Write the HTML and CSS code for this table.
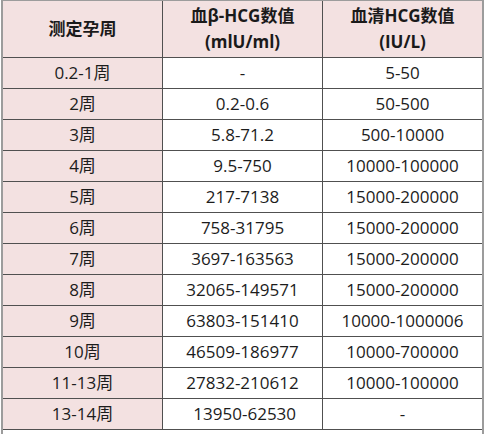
FILE: index.html
```html
<!DOCTYPE html>
<html lang="zh-CN">
<head>
<meta charset="utf-8">
<title>HCG数值表</title>
<link rel="stylesheet" href="styles.css">
</head>
<body>
<div class="frame">
  <table class="hcg">
    <thead>
      <tr>
        <th>测定孕周</th>
        <th>血β-HCG数值<br>(mlU/ml)</th>
        <th>血清HCG数值<br>(IU/L)</th>
      </tr>
    </thead>
    <tbody>
      <tr><td class="week">0.2-1周</td><td>-</td><td>5-50</td></tr>
      <tr><td class="week">2周</td><td>0.2-0.6</td><td>50-500</td></tr>
      <tr><td class="week">3周</td><td>5.8-71.2</td><td>500-10000</td></tr>
      <tr><td class="week">4周</td><td>9.5-750</td><td>10000-100000</td></tr>
      <tr><td class="week">5周</td><td>217-7138</td><td>15000-200000</td></tr>
      <tr><td class="week">6周</td><td>758-31795</td><td>15000-200000</td></tr>
      <tr><td class="week">7周</td><td>3697-163563</td><td>15000-200000</td></tr>
      <tr><td class="week">8周</td><td>32065-149571</td><td>15000-200000</td></tr>
      <tr><td class="week">9周</td><td>63803-151410</td><td>10000-1000006</td></tr>
      <tr><td class="week">10周</td><td>46509-186977</td><td>10000-700000</td></tr>
      <tr><td class="week">11-13周</td><td>27832-210612</td><td>10000-100000</td></tr>
      <tr><td class="week">13-14周</td><td>&nbsp;13950-62530</td><td>-</td></tr>
    </tbody>
  </table>
</div>
</body>
</html>
```
FILE: styles.css
```css
html, body {
  margin: 0;
  padding: 0;
  background: #ffffff;
}

body {
  font-family: "Open Sans", "Noto Sans CJK SC", sans-serif;
  color: #1c1c1c;
}

.frame {
  margin-left: 1px;
  width: 479px;
  height: 434px;
  border-left: 2px solid #9c9c9c;
  border-right: 2px solid #9c9c9c;
}

.hcg {
  width: 479px;
  border-spacing: 0;
  border-top: 1px solid #9c9c9c;
  table-layout: fixed;
}

.hcg th,
.hcg td {
  padding: 0;
  text-align: center;
  vertical-align: middle;
  border-bottom: 1px solid #505050;
  border-right: 1px solid #505050;
  box-sizing: border-box;
}

.hcg th:last-child,
.hcg td:last-child {
  border-right: none;
}

.hcg th:nth-child(1) { width: 160px; }
.hcg th:nth-child(2) { width: 160px; }
.hcg th:nth-child(3) { width: 159px; }

.hcg th {
  height: 57px;
  background: #f3e1e1;
  font-size: 17px;
  font-weight: 700;
  line-height: 26px;
  color: #1a1a1a;
}

.hcg td {
  height: 31px;
  font-size: 17px;
  line-height: 20px;
  font-weight: 400;
}

.hcg td.week {
  background: #f3e1e1;
}
```
